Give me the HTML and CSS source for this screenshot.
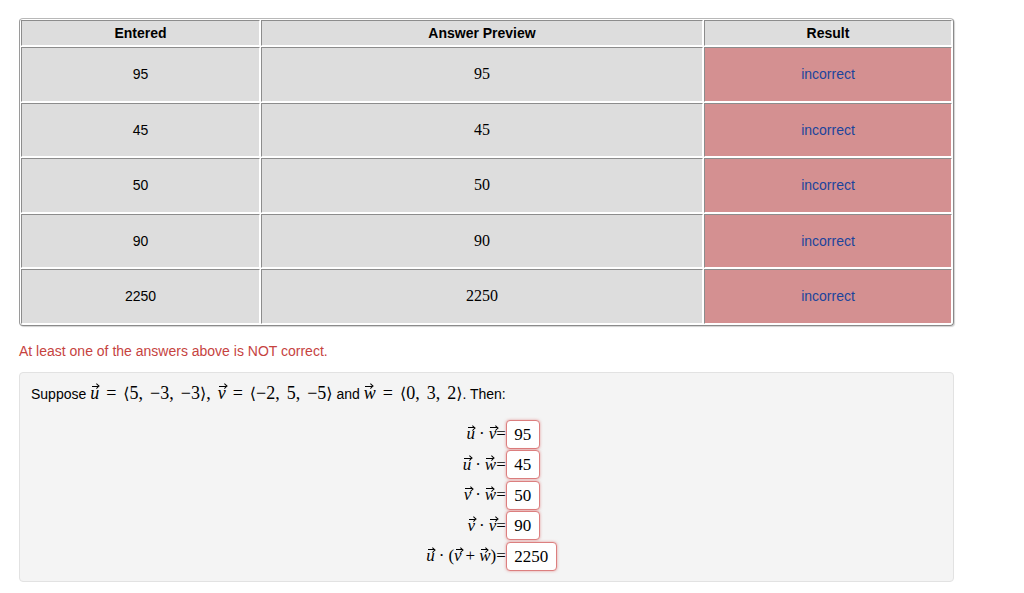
FILE: index.html
```html
<!DOCTYPE html>
<html lang="en">
<head>
<meta charset="utf-8">
<title>Attempt results</title>
<link rel="stylesheet" href="styles.css">
</head>
<body>
<div class="page">
  <table class="attempts">
    <thead>
      <tr>
        <th class="c1">Entered</th>
        <th class="c2">Answer Preview</th>
        <th class="c3">Result</th>
      </tr>
    </thead>
    <tbody>
      <tr><td>95</td><td class="preview">95</td><td class="result">incorrect</td></tr>
      <tr><td>45</td><td class="preview">45</td><td class="result">incorrect</td></tr>
      <tr><td>50</td><td class="preview">50</td><td class="result">incorrect</td></tr>
      <tr><td>90</td><td class="preview">90</td><td class="result">incorrect</td></tr>
      <tr><td>2250</td><td class="preview">2250</td><td class="result">incorrect</td></tr>
    </tbody>
  </table>

  <p class="msg">At least one of the answers above is NOT correct.</p>

  <div class="problem">
    <p class="intro">Suppose <span class="m"><span class="vec">u</span><span class="rel">=</span><span class="fence">⟨</span>5,<span class="th"></span>−3,<span class="th"></span>−3<span class="fence">⟩</span>,<span class="th"></span><span class="vec">v</span><span class="rel">=</span><span class="fence">⟨</span>−2,<span class="th"></span>5,<span class="th"></span>−5<span class="fence">⟩</span></span> and <span class="m"><span class="vec">w</span><span class="rel">=</span><span class="fence">⟨</span>0,<span class="th"></span>3,<span class="th"></span>2<span class="fence">⟩</span></span>. Then:</p>

    <div class="eqns">
      <div class="grid">
        <div class="lhs m"><span class="vec">u</span><span class="bin">·</span><span class="vec">v</span>=</div>
        <div class="ans">95</div>
        <div class="lhs m"><span class="vec">u</span><span class="bin">·</span><span class="vec">w</span>=</div>
        <div class="ans">45</div>
        <div class="lhs m"><span class="vec">v</span><span class="bin">·</span><span class="vec">w</span>=</div>
        <div class="ans">50</div>
        <div class="lhs m"><span class="vec">v</span><span class="bin">·</span><span class="vec">v</span>=</div>
        <div class="ans">90</div>
        <div class="lhs m"><span class="vec">u</span><span class="bin">·</span>(<span class="vec">v</span><span class="bin">+</span><span class="vec">w</span>)=</div>
        <div class="ans">2250</div>
      </div>
    </div>
  </div>
</div>
</body>
</html>
```

FILE: styles.css
```css
html, body {
  margin: 0;
  padding: 0;
  background: #ffffff;
}

body {
  font-family: "Liberation Sans", Arial, Helvetica, sans-serif;
  font-size: 14px;
  color: #000000;
}

.page {
  width: 935px;
  padding: 18px 0 0 19px;
}

/* results table */
.attempts {
  width: 935px;
  border-collapse: separate;
  border-spacing: 1px;
  border: 1px solid #b8b8b8;
  border-left-color: #9a9a9a;
  border-right-color: #8a8a8a;
  border-bottom-color: #8a8a8a;
  border-radius: 4px;
  box-shadow: 1px 1px 1px rgba(0, 0, 0, 0.18);
}

.attempts th,
.attempts td {
  box-sizing: border-box;
  background: #dddddd;
  border: 1px solid;
  border-color: #8c8c8c #ffffff #ffffff #8c8c8c;
  text-align: center;
  line-height: 16px;
}

.attempts th {
  padding: 4px;
  font-weight: bold;
}

.attempts td {
  padding: 18.25px 4px;
}

.c1 { width: 239px; }
.c2 { width: 442px; }
.c3 { width: 248px; }

.attempts td.preview {
  font-family: "Liberation Serif", "Times New Roman", serif;
  font-size: 16px;
}

.attempts td.result {
  background: #d49091;
  color: #1b449c;
}

/* feedback line */
.msg {
  margin: 17px 0 0;
  line-height: 16px;
  color: #c6433f;
}

/* problem body */
.problem {
  margin-top: 13px;
  background: #f4f4f4;
  border: 1px solid #e2e2e2;
  border-radius: 4px;
  padding: 10px 11px 10px;
}

.intro {
  margin: 0;
  line-height: 20px;
}

.m {
  font-family: "Liberation Serif", "DejaVu Serif", "Times New Roman", serif;
  font-size: 18px;
}

.fence {
  font-family: "DejaVu Serif", "Liberation Serif", serif;
  font-size: 16px;
}

.th {
  display: inline-block;
  width: 7px;
}

.rel {
  margin: 0 7px;
}

.bin {
  margin: 0 4px;
}

.vec {
  position: relative;
  display: inline-block;
  font-style: italic;
  line-height: 1;
}

.vec::before {
  content: "";
  position: absolute;
  left: 1.5px;
  top: 2px;
  width: 6.5px;
  height: 1.2px;
  background: currentColor;
}

.vec::after {
  content: "";
  position: absolute;
  left: 5px;
  top: 0.5px;
  width: 2.5px;
  height: 2.5px;
  border-top: 1.2px solid currentColor;
  border-right: 1.2px solid currentColor;
  transform: rotate(45deg);
}

.eqns {
  display: flex;
  justify-content: center;
  padding-left: 10px;
  margin-top: 16px;
}

.grid {
  display: grid;
  grid-template-columns: auto auto;
  row-gap: 1.5px;
  align-items: center;
}

.lhs {
  font-size: 17px;
  text-align: right;
  white-space: nowrap;
}

.ans {
  justify-self: start;
  box-sizing: border-box;
  height: 29px;
  padding: 0 7.5px;
  border: 1px solid #dc7f7f;
  border-radius: 4px;
  background: #ffffff;
  box-shadow: 0 0 3px rgba(214, 80, 80, 0.55);
  font-family: "Liberation Serif", "Times New Roman", serif;
  font-size: 17px;
  line-height: 27px;
}
```
